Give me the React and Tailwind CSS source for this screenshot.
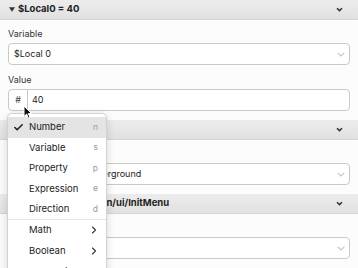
import { Check, ChevronRight } from 'lucide-react';

function HeaderChevron() {
  return (
    <svg width="7" height="5" viewBox="0 0 7 5" className="shrink-0">
      <path d="M1 1.2 L3.5 3.6 L6 1.2" fill="none" stroke="#333" strokeWidth="1.5" />
    </svg>
  );
}

function SelectChevron() {
  return (
    <svg width="8" height="5" viewBox="0 0 8 5" className="shrink-0">
      <path d="M0.7 0.8 L4 4 L7.3 0.8" fill="none" stroke="#c4c4c4" strokeWidth="1.1" />
    </svg>
  );
}

function SectionHeader({ title }) {
  return (
    <div className="flex h-[20px] items-center justify-between border-b border-[#d4d4d4] bg-gradient-to-b from-[#ececec] to-[#e1e1e1] pl-[9px] pr-[15px]">
      <div className="flex items-center gap-[3px] text-[9.5px] font-bold text-[#222]">
        <svg width="6" height="5" viewBox="0 0 6 5">
          <path d="M0 0.3 H6 L3 4.7 Z" fill="#333" />
        </svg>
        <span className="whitespace-nowrap">{title}</span>
      </div>
      <HeaderChevron />
    </div>
  );
}

function Field({ label, children, className = '' }) {
  return (
    <div className={className}>
      <div className="mb-[3px] h-[13px] text-[9px] leading-[13px] text-[#333]">{label}</div>
      {children}
    </div>
  );
}

function Select({ value }) {
  return (
    <div className="flex h-[22px] items-center justify-between rounded-[4px] border border-[#c9c9c9] bg-white pl-[5px] pr-[4px] text-[9px] text-[#222]">
      <span className="whitespace-nowrap">{value}</span>
      <SelectChevron />
    </div>
  );
}

const items = [
  { label: 'Number', key: 'n', checked: true },
  { label: 'Variable', key: 's' },
  { label: 'Property', key: 'p' },
  { label: 'Expression', key: 'e' },
  { label: 'Direction', key: 'd' },
];

const groups = ['Math', 'Boolean', 'Comparison'];

export default function App() {
  return (
    <div className="relative h-[268px] w-[358px] overflow-hidden bg-[#fcfcfc] font-['Inter',sans-serif]">
      <SectionHeader title="$Local0 = 40" />
      <div className="px-2 pb-[9px] pt-[7px]">
        <Field label="Variable">
          <Select value="$Local 0" />
        </Field>
        <Field label="Value" className="mt-2">
          <div className="flex h-[22px] items-center rounded-[4px] border border-[#c9c9c9] bg-white text-[9px] text-[#222]">
            <div className="flex h-full w-[19px] items-center justify-center border-r border-[#c9c9c9] text-[#444]">#</div>
            <span className="pl-[4px]">40</span>
          </div>
        </Field>
      </div>

      <SectionHeader title="Set Layer" />
      <div className="px-2 pb-[9px] pt-[7px]">
        <Field label="Layer">
          <Select value="Tiles: Layer 2 — Underground" />
        </Field>
      </div>

      <SectionHeader title="Call Functions /main/ui/InitMenu" />
      <div className="px-2 pb-[9px] pt-[7px]">
        <Field label="Arguments">
          <Select value="None" />
        </Field>
      </div>

      {/* type picker popup */}
      <div className="absolute left-[7px] top-[113px] w-[100px] rounded-[5px] border border-[#d2d2d2] bg-white pt-[3px] shadow-[0_2px_8px_rgba(0,0,0,0.15)]">
        {items.map((it) => (
          <div
            key={it.label}
            className={`flex h-[20.5px] items-center pr-[8px] text-[9.5px] text-[#222] ${it.checked ? 'bg-[#e4e4e4]' : ''}`}
          >
            <div className="flex w-[21px] justify-end pr-[5px]">
              {it.checked && <Check size={11} strokeWidth={3.5} color="#222" />}
            </div>
            <span className="flex-1">{it.label}</span>
            <span className="text-[8.5px] text-[#9a9a9a]">{it.key}</span>
          </div>
        ))}
        <div className="mt-[-1px] h-px bg-[#e4e4e4]" />
        {groups.map((g) => (
          <div key={g} className="flex h-[21px] items-center pl-[21px] pr-[6px] text-[9.5px] text-[#222]">
            <span className="flex-1">{g}</span>
            <ChevronRight size={12} strokeWidth={2.2} color="#333" />
          </div>
        ))}
      </div>

      {/* mouse pointer */}
      <svg className="absolute left-[23px] top-[105px]" width="10" height="15" viewBox="0 0 10 15">
        <path
          d="M1 1 L1 11.5 L3.6 9.1 L5.4 13.2 L7 12.5 L5.3 8.6 L8.6 8.6 Z"
          fill="#111"
          stroke="#fff"
          strokeWidth="1"
          strokeLinejoin="round"
        />
      </svg>
    </div>
  );
}
